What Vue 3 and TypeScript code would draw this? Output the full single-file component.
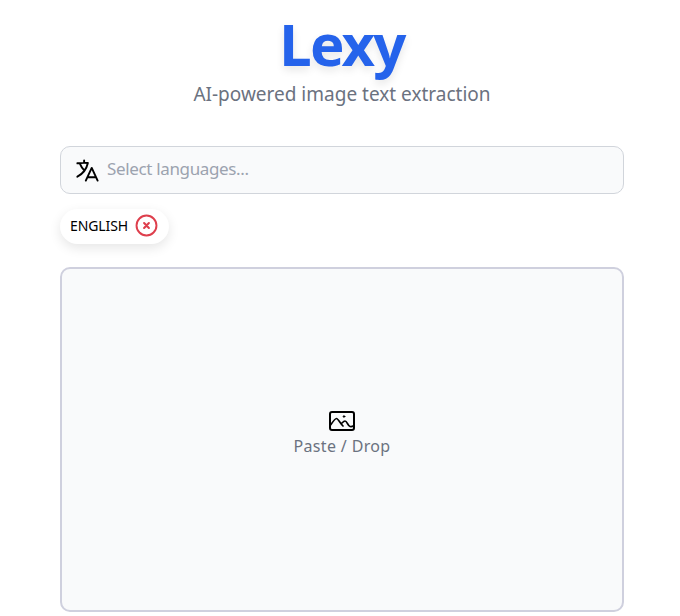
<script setup lang="ts">
import { ref } from 'vue'
const languages = ref<string[]>(['ENGLISH'])
</script>

<template>
  <main class="page">
    <header class="head">
      <h1 class="title">Lexy</h1>
      <p class="sub">AI-powered image text extraction</p>
    </header>

    <div class="select">
      <svg class="lang-icon" viewBox="0 0 24 24" fill="none" stroke="currentColor" stroke-width="1.7" stroke-linecap="round" stroke-linejoin="round">
        <path d="M10.5 21l5.25-11.25L21 21m-9-3h7.5M3 5.62a48.47 48.47 0 0 1 6-.37m0 0c1.12 0 2.23.04 3.33.11M9 5.25V3m3.33 2.36C11.17 10.66 7.69 15.08 3 17.5m6.33-5.34c-1.6-1.63-2.9-3.56-3.8-5.7" />
      </svg>
      <span class="placeholder">Select languages...</span>
    </div>

    <div class="chips">
      <div v-for="l in languages" :key="l" class="chip">
        <span>{{ l }}</span>
        <svg class="x" viewBox="0 0 24 24" fill="none" stroke="currentColor" stroke-linecap="round">
          <circle cx="12" cy="12" r="10.4" stroke-width="2" />
          <path d="M9.5 9.5l5 5m0-5l-5 5" stroke-width="2.2" />
        </svg>
      </div>
    </div>

    <section class="drop">
      <svg class="img-icon" viewBox="0 0 26 20" fill="none" stroke="currentColor" stroke-width="2" stroke-linejoin="round" stroke-linecap="round">
        <rect x="1" y="1" width="24" height="18" rx="2" />
        <path d="M1.5 14C4 10.5 6 7.5 7.5 7.5S11 12 14 15M13 12c1-1 2-2 3-2 2 0 3 5 5 5.5 1.5.4 3-.3 4-1" stroke-width="1.7" />
        <circle cx="15" cy="5.5" r="0.8" fill="currentColor" stroke-width="1" />
      </svg>
      <span class="hint">Paste / Drop</span>
    </section>
  </main>
</template>

<style scoped>
.page {
  box-sizing: border-box;
  width: 680px;
  height: 616px;
  padding: 0 56px 0 60px;
  display: flex;
  flex-direction: column;
  overflow: hidden;
  background: #fff;
  font-family: "Noto Sans", "Open Sans", sans-serif;
}
.head {
  height: 146px;
  display: flex;
  flex-direction: column;
  align-items: center;
  padding-top: 8px;
  box-sizing: border-box;
}
.title {
  margin: 0;
  font-size: 58px;
  line-height: 72px;
  font-weight: 700;
  letter-spacing: -1.8px;
  color: #2563eb;
  text-shadow: 0 4px 8px rgba(0, 0, 0, 0.1);
}
.sub {
  margin: 0;
  font-size: 19px;
  line-height: 28px;
  color: #6b7280;
}
.select {
  box-sizing: border-box;
  height: 48px;
  display: flex;
  align-items: center;
  gap: 6px;
  padding: 0 0 0 13px;
  background: #f9fafb;
  border: 1px solid #d1d5db;
  border-radius: 10px;
}
.lang-icon {
  width: 27px;
  height: 27px;
  color: #000;
}
.placeholder {
  font-size: 17px;
  letter-spacing: -0.35px;
  line-height: 24px;
  padding-bottom: 3px;
  color: #9ca3af;
}
.chips {
  display: flex;
  margin-top: 15px;
}
.chip {
  box-sizing: border-box;
  height: 35px;
  display: flex;
  align-items: center;
  gap: 7px;
  padding: 0 11px 2px 10px;
  background: #fff;
  border-radius: 18px;
  font-size: 14px;
  letter-spacing: -0.1px;
  color: #000;
  box-shadow: 0 4px 12px rgba(0, 0, 0, 0.1);
}
.x {
  width: 23px;
  height: 23px;
  color: #de3f4d;
}
.drop {
  box-sizing: border-box;
  margin-top: 23px;
  height: 345px;
  padding-bottom: 10px;
  display: flex;
  flex-direction: column;
  align-items: center;
  justify-content: center;
  gap: 3px;
  background: #f9fafb;
  border: 2px solid #cfd0de;
  border-radius: 10px;
}
.img-icon {
  width: 26px;
  height: 20px;
  color: #000;
}
.hint {
  font-size: 16px;
  line-height: 24px;
  letter-spacing: 0.35px;
  color: #6b7280;
}
</style>
